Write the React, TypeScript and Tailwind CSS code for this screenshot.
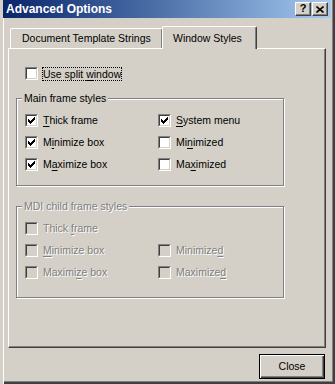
import React from "react";

type Opt = { label: string; u: number; checked?: boolean };

const CheckMark = () => (
	<svg width="9" height="9" viewBox="0 0 9 9" shapeRendering="crispEdges" className="block">
		<g fill="#000">
			<rect x="7" y="1" width="1" height="1" />
			<rect x="6" y="2" width="2" height="1" />
			<rect x="1" y="3" width="1" height="1" />
			<rect x="5" y="3" width="3" height="1" />
			<rect x="1" y="4" width="2" height="1" />
			<rect x="4" y="4" width="3" height="1" />
			<rect x="1" y="5" width="5" height="1" />
			<rect x="2" y="6" width="3" height="1" />
			<rect x="3" y="7" width="1" height="1" />
		</g>
	</svg>
);

const Box = ({ checked, disabled }: { checked?: boolean; disabled?: boolean }) => (
	<span className="block h-[13px] w-[13px] shrink-0 border border-t-[#808080] border-l-[#808080] border-r-white border-b-white">
		<span
			className={
				disabled
					? "block h-full w-full border border-t-[#404040] border-l-[#404040] border-r-[#d4d0c8] border-b-[#d4d0c8] bg-[#d4d0c8]"
					: "block h-full w-full border border-t-[#404040] border-l-[#404040] border-r-[#d4d0c8] border-b-[#d4d0c8] bg-white"
			}
		>
			{checked && <CheckMark />}
		</span>
	</span>
);

const Label = ({ text, u }: { text: string; u: number }) => (
	<>
		{text.slice(0, u)}
		<span className="underline underline-offset-[2px]">{text[u]}</span>
		{text.slice(u + 1)}
	</>
);

const Row = ({ opt, disabled }: { opt: Opt; disabled?: boolean }) => (
	<div className="flex h-[13px] items-center">
		<Box checked={opt.checked} disabled={disabled} />
		<span
			className={
				disabled
					? "ml-[5px] whitespace-nowrap leading-[13px] text-[#808080] [text-shadow:1px_1px_0_#fff]"
					: "ml-[5px] whitespace-nowrap leading-[13px] text-black"
			}
		>
			<Label text={opt.label} u={opt.u} />
		</span>
	</div>
);

const Group = ({
	title,
	left,
	right,
	disabled,
	h,
}: {
	title: string;
	left: Opt[];
	right: (Opt | null)[];
	disabled?: boolean;
	h: string;
}) => (
	<div className={`relative ml-[7px] w-[268px] border border-[#808080] shadow-[inset_1px_1px_0_#fff,1px_1px_0_#fff] ${h}`}>
		<span
			className={
				disabled
					? "absolute left-[5px] top-[-8px] h-[14px] bg-[#d4d0c8] px-[2px] leading-[14px] text-[#808080] [text-shadow:1px_1px_0_#fff]"
					: "absolute left-[5px] top-[-8px] h-[14px] bg-[#d4d0c8] px-[2px] leading-[14px] text-black"
			}
		>
			{title}
		</span>
		<div className="grid grid-cols-[133px_1fr] gap-y-[9px] pl-[8px] pt-[15px]">
			{left.map((o, i) => (
				<React.Fragment key={o.label + i}>
					<Row opt={o} disabled={disabled} />
					{right[i] ? <Row opt={right[i] as Opt} disabled={disabled} /> : <div />}
				</React.Fragment>
			))}
		</div>
	</div>
);

const TitleButton = ({ children }: { children: React.ReactNode }) => (
	<div className="flex h-[14px] w-[16px] items-center justify-center border border-t-white border-l-white border-r-[#404040] border-b-[#404040] bg-[#d4d0c8] shadow-[inset_-1px_-1px_0_#808080]">
		{children}
	</div>
);

export default function App() {
	return (
		<div
			className="h-[384px] w-[335px] overflow-hidden bg-[#d4d0c8] text-[10.5px] text-black shadow-[inset_3px_0_0_#d4d0c8,inset_4px_0_0_#fff,inset_-2px_-2px_0_#404040,inset_-3px_-3px_0_#808080]"
			style={{ fontFamily: '"Liberation Sans", Arial, sans-serif' }}
		>
			{/* title bar */}
			<div className="ml-[3px] flex h-[18px] w-[328px] items-center bg-gradient-to-r from-[#0a246a] to-[#a6caf0] pl-[3px] pr-[3px]">
				<span className="text-[12px] font-bold text-white">Advanced Options</span>
				<div className="ml-auto flex gap-[1px]">
					<TitleButton>
						<span className="mt-[-1px] text-[11px] font-bold leading-none">?</span>
					</TitleButton>
					<TitleButton>
						<svg width="8" height="7" viewBox="0 0 8 7" className="block">
							<path d="M0.5 0.5 L7.5 6.5 M7.5 0.5 L0.5 6.5" stroke="#000" strokeWidth="1.6" />
						</svg>
					</TitleButton>
				</div>
			</div>

			{/* tabs */}
			<div className="ml-[8px] mt-[8px] w-[318px]">
				<div className="flex h-[22px] items-end pl-[2px]">
					<div className="flex h-[20px] w-[152px] items-center rounded-tl-[2px] border-l border-t border-l-white border-t-white pl-[11px] pt-[1px] shadow-[inset_-1px_0_0_#808080]">
						Document Template Strings
					</div>
					<div className="relative z-10 -mb-[1px] flex h-[23px] w-[95px] items-center rounded-t-[2px] border-l border-r border-t border-l-white border-r-[#404040] border-t-white bg-[#d4d0c8] pl-[10px] pt-[1px] shadow-[inset_-1px_0_0_#808080]">
						Window Styles
					</div>
				</div>
				<div className="h-[300px] border border-b-[#404040] border-l-white border-r-[#404040] border-t-white shadow-[inset_-1px_-1px_0_#808080]">
					<div className="ml-[16px] mt-[18px] flex h-[13px] items-center">
						<Box />
						<span className="ml-[4px] h-[14px] whitespace-nowrap border border-dotted border-black px-[0px] leading-[12px]">
							<Label text="Use split window" u={10} />
						</span>
					</div>
					<div className="mt-[18px]">
						<Group
							title="Main frame styles"
							h="h-[88px]"
							left={[
								{ label: "Thick frame", u: 0, checked: true },
								{ label: "Minimize box", u: 1, checked: true },
								{ label: "Maximize box", u: 1, checked: true },
							]}
							right={[
								{ label: "System menu", u: 0, checked: true },
								{ label: "Minimized", u: 2 },
								{ label: "Maximized", u: 2 },
							]}
						/>
					</div>
					<div className="mt-[20px]">
						<Group
							title="MDI child frame styles"
							h="h-[92px]"
							disabled
							left={[
								{ label: "Thick frame", u: 6 },
								{ label: "Minimize box", u: 0 },
								{ label: "Maximize box", u: 6 },
							]}
							right={[
								null,
								{ label: "Minimized", u: 8 },
								{ label: "Maximized", u: 8 },
							]}
						/>
					</div>
				</div>
			</div>

			{/* buttons */}
			<div className="mt-[6px] flex justify-end pr-[10px]">
				<button className="h-[25px] w-[66px] border border-black bg-[#d4d0c8] text-[10.5px] text-black shadow-[inset_1px_1px_0_#fff,inset_-1px_-1px_0_#404040,inset_-2px_-2px_0_#808080]">
					Close
				</button>
			</div>
		</div>
	);
}
